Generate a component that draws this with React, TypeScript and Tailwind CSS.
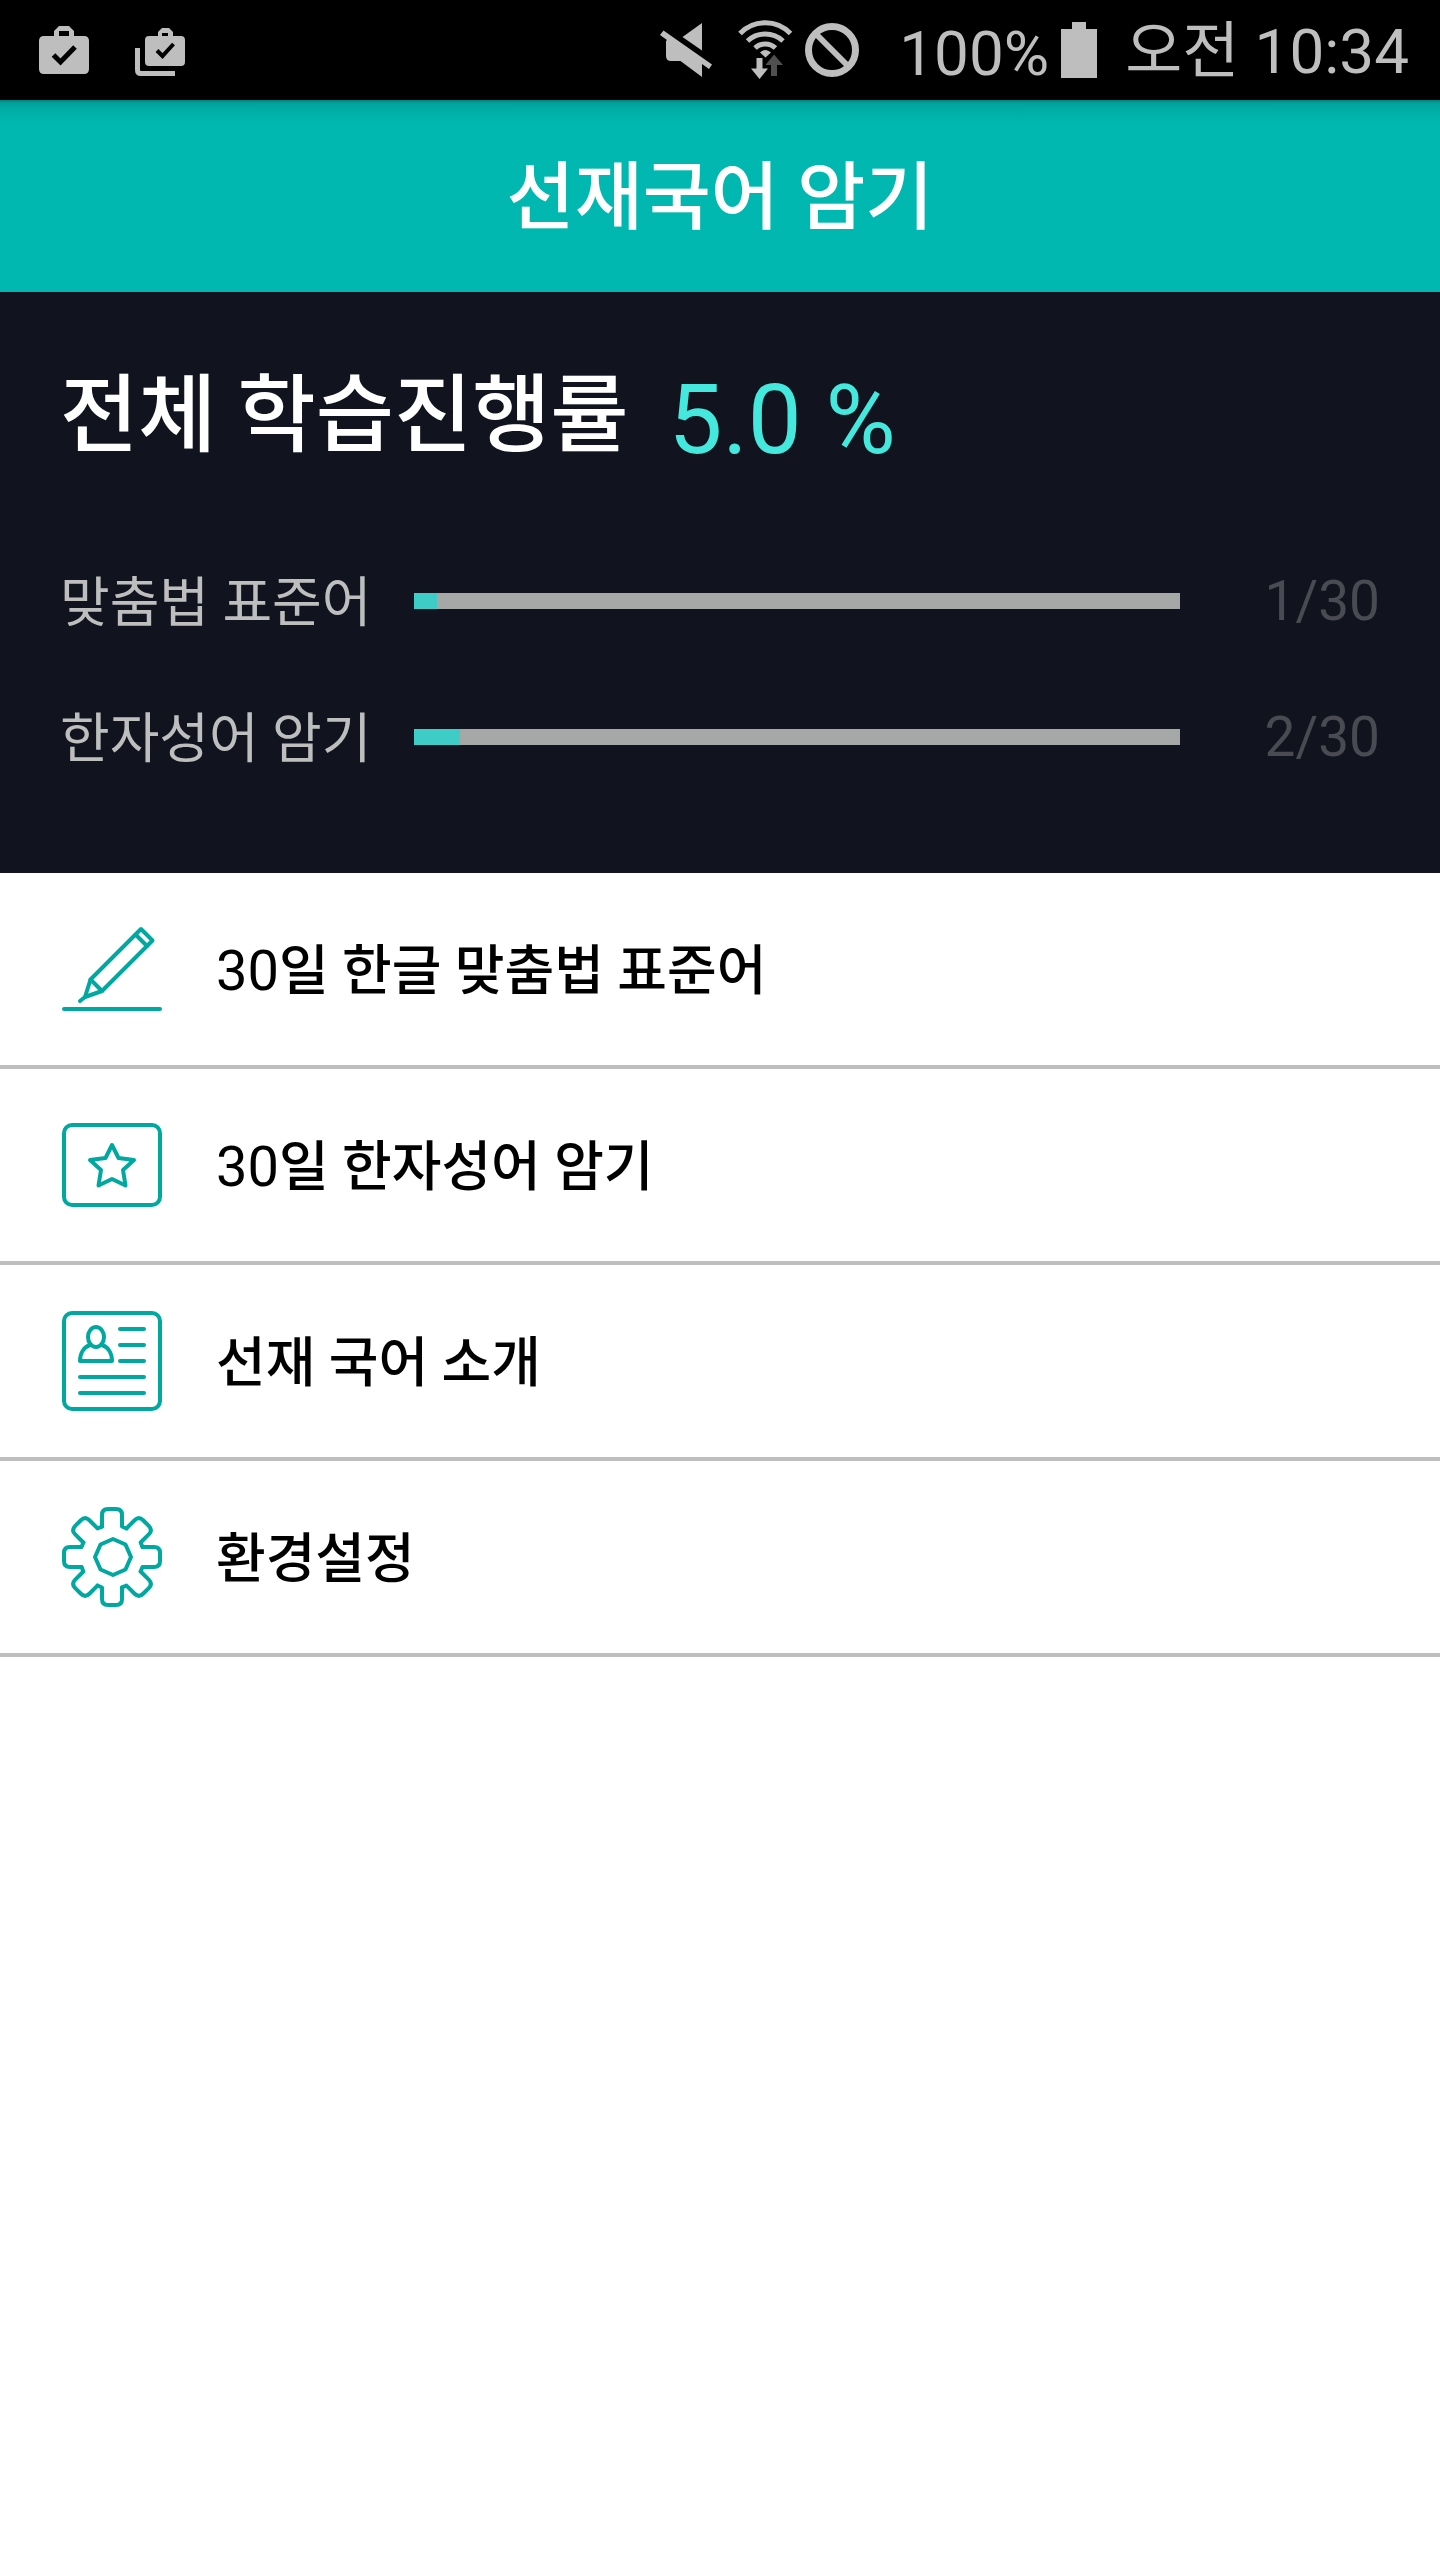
import React from 'react';

const progressRows = [
  { label: '맞춤법 표준어', done: 1, total: 30, percent: 3 },
  { label: '한자성어 암기', done: 2, total: 30, percent: 6 },
];

const PencilIcon = () => (
  <>
    <path d="M79 10L90.500 21.500L40 72L23 78L28.500 60.500Z" />
    <path d="M73.500 15.500L85 27M28.500 60.500L40 72M23 78L18 82M2 90H98" />
  </>
);

const StarCardIcon = () => (
  <>
    <rect x="2" y="10" width="96" height="80" rx="8" />
    <path d="M50 30L56.500 43L72 45L61 55L63.500 70.500L50 64L36.500 70.500L39 55L28 45L43.500 43Z" />
  </>
);

const ProfileIcon = () => (
  <>
    <rect x="2" y="2" width="96" height="96" rx="8" />
    <ellipse cx="34" cy="26" rx="8" ry="10" />
    <path d="M28 34C22 36 18 42 18 50H50C50 42 46 36 40 34" />
    <path d="M58 18H82M58 34H82M58 50H82M18 66H82M18 82H82" />
  </>
);

const GearIcon = () => (
  <>
    {[0, 45, 90, 135, 180, 225, 270, 315].map((angle) => (
      <path
        key={angle}
        transform={`translate(50 50) rotate(${angle})`}
        d="M-10 -30.500V-42Q-10 -48 -4 -48H4Q10 -48 10 -42V-30.500L14.500 -28.600"
      />
    ))}
    <path d="M51 32L63.500 37.500L69 50L63.500 62.500L51 68L38.500 62.500L33 50L38.500 37.500Z" />
  </>
);

const menuItems = [
  { days: '30', label: '일 한글 맞춤법 표준어', href: '#spelling', Icon: PencilIcon },
  { days: '30', label: '일 한자성어 암기', href: '#idioms', Icon: StarCardIcon },
  { days: '', label: '선재 국어 소개', href: '#about', Icon: ProfileIcon },
  { days: '', label: '환경설정', href: '#settings', Icon: GearIcon },
];

const StatusBar = () => (
  <div className="flex h-[100px] items-center bg-black pl-[39px] pr-[31px] text-[62px] leading-[100px] text-[#bebebe]">
    <svg width="50" height="48" viewBox="0 0 50 48" fill="currentColor">
      <path fillRule="evenodd" d="M15 10V5L20 0H30L35 5V10H45Q50 10 50 15V43Q50 48 45 48H5Q0 48 0 43V15Q0 10 5 10ZM20 10H30V5H20Z" />
      <path d="M14.500 29L21.500 36L36 21" fill="none" stroke="#000" strokeWidth="5" />
    </svg>
    <svg className="ml-[46px] mt-1" width="50" height="48" viewBox="0 0 50 48" fill="currentColor">
      <path fillRule="evenodd" d="M23 8V4L27 0H34L38 4V8H46Q50 8 50 12V34Q50 38 46 38H14Q10 38 10 34V12Q10 8 14 8ZM27 8H33V5H27Z" />
      <path d="M22 22.500L27.500 28L38.500 16" fill="none" stroke="#000" strokeWidth="4" />
      <path d="M2.500 20V42Q2.500 45.500 6 45.500H40" fill="none" stroke="currentColor" strokeWidth="5" />
    </svg>

    <div className="ml-auto flex items-center">
      <svg width="52" height="54" viewBox="0 0 52 54" fill="currentColor">
        <path d="M42 0V27.500L22.500 14Z" />
        <path d="M0 12L3.500 7.500L52 41.500L49 46L42 41V54L20.500 38H11Q6 38 6 33V18L7 17Z" />
      </svg>
      <svg className="ml-[26px]" width="55" height="60" viewBox="0 0 55 60" fill="currentColor">
        <g fill="none" stroke="currentColor" strokeWidth="5">
          <path d="M2 13.500A35 35 0 0 1 52.500 13.500" />
          <path d="M9.500 21A26 26 0 0 1 45 21" />
          <path d="M17 28A15 15 0 0 1 37.500 28" />
        </g>
        <path d="M22 32.500Q27.500 27.500 33 32.500L27.500 37.500Z" />
        <path d="M18.500 38H24.500V48.500H30L21.500 59L13 48.500H18.500Z" />
        <path d="M36 34.500L45 45H39V56H33V45H27.500Z" fill="#505050" />
      </svg>
      <svg className="ml-3" width="54" height="54" viewBox="0 0 54 54" fill="none" stroke="currentColor" strokeWidth="7">
        <circle cx="27" cy="27" r="23.500" />
        <path d="M11 11L43 43" strokeWidth="6" />
      </svg>
      <span className="ml-10 pt-2">100%</span>
      <svg className="ml-3" width="36" height="56" viewBox="0 0 36 56" fill="currentColor">
        <path d="M11 0H25V7H36V56H0V7H11Z" />
      </svg>
      <span className="ml-7 pt-1">오전 10:34</span>
    </div>
  </div>
);

const App = () => {
  return (
    <div className="min-h-screen bg-white font-['Roboto','Noto_Sans_CJK_KR',sans-serif]">
      <StatusBar />

      <header className="flex h-48 items-center justify-center bg-[#00b8b0] bg-[linear-gradient(#0000004d_0px,#0000001f_3px,#00000010_9px,#00000000_24px)] pt-1">
        <h1 className="text-[74px] font-medium leading-none text-white">선재국어 암기</h1>
      </header>

      <section className="bg-[#11131f] px-[60px] pt-[60px] pb-[68px]">
        <h2 className="flex items-center gap-10 text-[85px] font-medium leading-[120px] text-white">
          전체 학습진행률
          <span className="pt-2 text-[96px] font-normal text-[#45e8dc]">5.0 %</span>
        </h2>
        <div className="mt-[53px]">
          {progressRows.map((row) => (
            <div key={row.label} className="flex h-[136px] items-center text-[54px]">
              <span className="w-[354px] pt-1 text-[#bebebe]">{row.label}</span>
              <div
                className="h-4 flex-1 bg-[#a5a8a6]"
                role="progressbar"
                aria-label={row.label}
                aria-valuenow={row.percent}
              >
                <div className="h-full bg-[#3eccc6]" style={{ width: `${row.percent}%` }}></div>
              </div>
              <span className="w-[200px] text-right text-[55px] text-[#4a4a52]">
                {row.done}/{row.total}
              </span>
            </div>
          ))}
        </div>
      </section>

      <nav>
        {menuItems.map(({ days, label, href, Icon }) => (
          <a
            key={label}
            href={href}
            className="flex h-[196px] items-center border-b-4 border-[#bebebe] pl-[62px] text-[54px] font-medium text-black"
          >
            <svg
              className="mr-[54px] shrink-0"
              width="100"
              height="100"
              viewBox="0 0 100 100"
              fill="none"
              stroke="#00a8a0"
              strokeWidth="4"
              strokeLinecap="round"
              strokeLinejoin="round"
            >
              <Icon />
            </svg>
            <span className="pt-1">
              {days && <span className="text-[56px] font-normal">{days}</span>}
              {label}
            </span>
          </a>
        ))}
      </nav>
    </div>
  );
};

export default App;
